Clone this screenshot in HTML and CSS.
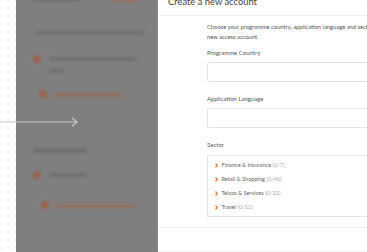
FILE: index.html
```html
<!DOCTYPE html>
<html>
<head>
  <meta charset="utf-8"/>
  <title>Create a new account</title>
  <link rel="stylesheet" href="styles.css">
</head>
<body>
  <div class="page">
    <div class="dots"></div>

    <div class="backdrop">
      <div class="blur">
        <div class="top-row">
          <span class="bar dark w50"></span>
          <span class="bar orange w25"></span>
        </div>
        <div class="bar dark line"></div>
        <div class="item">
          <span class="dot"></span>
          <div>
            <div class="bar dark w88"></div>
            <div class="bar dark w15 sub"></div>
          </div>
        </div>
        <div class="link">
          <span class="dot"></span>
          <span class="bar orange w70"></span>
        </div>
        <div class="bar dark heading"></div>
        <div class="item second">
          <span class="dot"></span>
          <div>
            <div class="bar dark w38"></div>
          </div>
        </div>
        <div class="link last">
          <span class="dot"></span>
          <span class="bar orange w80"></span>
        </div>
      </div>
    </div>

    <div class="modal">
      <div class="modal-header">Create a new account</div>
      <div class="modal-body">
        <p class="intro">Choose your programme country, application language and sector for your new access account.</p>

        <label class="field-label">Programme Country</label>
        <div class="input"></div>

        <label class="field-label">Application Language</label>
        <div class="input"></div>

        <label class="field-label">Sector</label>
        <ul class="sectors">
          <li><svg class="chev" width="3" height="5" viewBox="0 0 3 5"><polyline points="0.5,0.5 2.4,2.5 0.5,4.5" fill="none" stroke="#ef7a30" stroke-width="1.1"/></svg>Finance &amp; Insurance <span class="count">(0/7)</span></li>
          <li><svg class="chev" width="3" height="5" viewBox="0 0 3 5"><polyline points="0.5,0.5 2.4,2.5 0.5,4.5" fill="none" stroke="#ef7a30" stroke-width="1.1"/></svg>Retail &amp; Shopping <span class="count">(0/40)</span></li>
          <li><svg class="chev" width="3" height="5" viewBox="0 0 3 5"><polyline points="0.5,0.5 2.4,2.5 0.5,4.5" fill="none" stroke="#ef7a30" stroke-width="1.1"/></svg>Telcos &amp; Services <span class="count">(0/22)</span></li>
          <li><svg class="chev" width="3" height="5" viewBox="0 0 3 5"><polyline points="0.5,0.5 2.4,2.5 0.5,4.5" fill="none" stroke="#ef7a30" stroke-width="1.1"/></svg>Travel <span class="count">(0/11)</span></li>
        </ul>
      </div>
      <div class="modal-footer"></div>
    </div>

    <!-- pointer arrow drawn over the page -->
    <svg class="arrow" width="80" height="12" viewBox="0 0 80 12">
      <line x1="0" y1="6" x2="77" y2="6" stroke="#c9c9c9" stroke-width="1.2"/>
      <polyline points="72,1.8 77,6 72,10.2" fill="none" stroke="#c9c9c9" stroke-width="1.2"/>
    </svg>
  </div>
</body>
</html>
```

FILE: styles.css
```css
html, body {
  margin: 0;
  padding: 0;
}
body {
  font-family: Lato, "Open Sans", sans-serif;
  background-color: #fff;
  overflow: hidden;
}
.page {
  position: relative;
  display: flex;
  width: 367px;
  height: 252px;
  overflow: hidden;
}

/* left white strip with dot grid */
.dots {
  flex: none;
  width: 16px;
  background-color: #fff;
  background-image: radial-gradient(circle, #e4e4e4 0.55px, transparent 0.8px);
  background-size: 7.5px 8px;
  background-position: -2.75px -4px;
}

/* dimmed page behind the modal */
.backdrop {
  flex: none;
  width: 141px;
  background-color: #7f7f7f;
  border-right: 1px solid #898989;
  overflow: hidden;
}
.blur {
  filter: blur(1.7px);
  padding: 0 10px 0 17px;
}
.bar {
  display: block;
  height: 4px;
  border-radius: 2px;
}
.bar.dark { background-color: #707070; }
.bar.orange { background-color: #927060; }
.w15 { width: 15px; }
.w25 { width: 25px; }
.w38 { width: 38px; }
.w50 { width: 48px; }
.w70 { width: 70px; }
.w80 { width: 80px; }
.w88 { width: 88px; }
.top-row {
  display: flex;
  justify-content: space-between;
  padding-right: 8px;
  margin-top: -2px;
}
.line {
  margin: 29px 0 0 2px;
  width: 110px;
}
.item {
  display: flex;
  gap: 8px;
  margin-top: 22px;
}
.item .sub {
  margin-top: 8px;
}
.item.second {
  margin-top: 20px;
}
.dot {
  flex: none;
  width: 8px;
  height: 8px;
  border-radius: 50%;
  background-color: #9a6350;
  margin-top: -2px;
}
.link {
  display: flex;
  align-items: center;
  gap: 6px;
  margin: 19px 0 0 6px;
}
.link.last {
  margin: 24px 0 0 8px;
}
.heading {
  width: 54px;
  height: 5px;
  margin: 50px 0 0 0;
}

/* modal */
.modal {
  flex: none;
  width: 260px;
  background-color: #fff;
  color: #555;
}
.modal-header {
  font-size: 9.4px;
  color: #444;
  line-height: 12px;
  margin-top: -4px;
  padding: 0 0 7px 10px;
  border-bottom: 1px solid #efefef;
}
.modal-body {
  padding: 6px 0 10px 49px;
  border-bottom: 1px solid #efefef;
}
.intro {
  margin: 0 0 7px;
  font-size: 5.8px;
  line-height: 9.5px;
  width: 190px;
}
.field-label {
  display: block;
  font-size: 6px;
  line-height: 10px;
  color: #555;
}
.input {
  height: 18px;
  border: 1px solid #e3e3e3;
  border-radius: 2px;
  margin: 4px 0 12px;
}
.sectors {
  list-style: none;
  margin: 5px 0 0;
  padding: 2px 0 2px 7px;
  border: 1px solid #e3e3e3;
  border-right: none;
}
.sectors li {
  font-size: 5.6px;
  line-height: 14px;
  color: #666;
}
.chev {
  margin-right: 3.5px;
  vertical-align: -0.5px;
}
.count {
  color: #aaa;
}
.modal-footer {
  height: 23px;
  border-bottom: 1px solid #efefef;
}

.arrow {
  position: absolute;
  left: 0;
  top: 116px;
}
```
